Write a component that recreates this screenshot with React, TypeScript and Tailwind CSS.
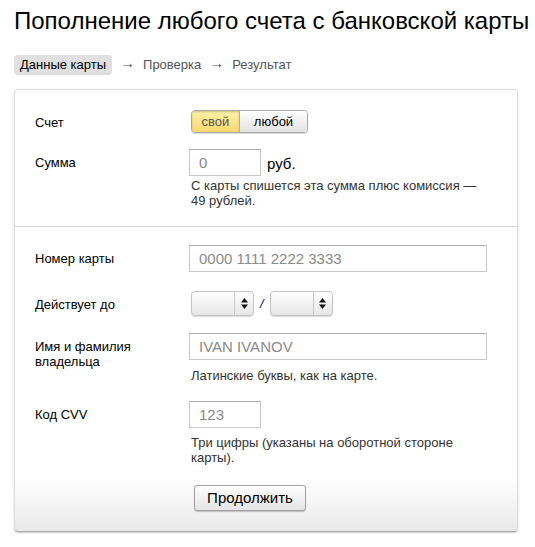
const FONT = { fontFamily: '"Liberation Sans", Arial, sans-serif' };

function Row({ label, children, className = "" }: { label: React.ReactNode; children: React.ReactNode; className?: string }) {
  return (
    <div className={`flex ${className}`}>
      <div className="w-[176px] shrink-0 pl-[20px] pt-[6px] text-[13px] leading-[15px] text-black">{label}</div>
      <div className="flex-1">{children}</div>
    </div>
  );
}

function TextBox({ value, w }: { value: string; w: string }) {
  return (
    <div className={`${w} h-[27px] border border-[#c8c8c8] border-t-[#b0b0b0] bg-white px-[9px] text-[15px] leading-[25px] text-[#8a8a8a]`}>
      {value}
    </div>
  );
}

function SelectBox() {
  return (
    <div className="flex h-[25px] w-[63px] rounded-[4px] border border-[#c4c4c4] bg-gradient-to-b from-[#ffffff] to-[#e6e6e6] shadow-[0_1px_1px_rgba(0,0,0,0.15)]">
      <div className="flex-1" />
      <div className="flex w-[19px] items-center justify-center border-l border-[#c8c8c8]">
        <svg width="7" height="11" viewBox="0 0 7 11">
          <path d="M3.5 0 L7 4.5 L0 4.5 Z" fill="#111" />
          <path d="M0 6.5 L7 6.5 L3.5 11 Z" fill="#111" />
        </svg>
      </div>
    </div>
  );
}

function Hint({ children }: { children: React.ReactNode }) {
  return <p className="text-[13px] leading-[15px] text-[#333]">{children}</p>;
}

export default function App() {
  return (
    <div className="min-h-[547px] bg-white pt-[6px]" style={FONT}>
      <h1 className="whitespace-nowrap pl-[14px] text-[24px] leading-[30px] text-black">Пополнение любого счета с банковской карты</h1>

      {/* Steps */}
      <div className="mt-[19px] flex h-[20px] items-center pl-[14px] text-[13px] text-[#555]">
        <span className="flex h-[20px] items-center rounded-[4px] bg-[#e0e0e0] px-[6px] text-black">Данные карты</span>
        <span className="relative -top-[3px] px-[8px] text-[15px] leading-[15px]">→</span>
        <span>Проверка</span>
        <span className="relative -top-[3px] px-[8px] text-[15px] leading-[15px]">→</span>
        <span>Результат</span>
      </div>

      {/* Card */}
      <div className="mx-[14px] mt-[14px] w-[504px] overflow-hidden rounded-[4px] border border-[#dcdcdc] border-b-[#aaa] bg-gradient-to-b from-white from-[88%] to-[#e9e9e9] shadow-[0_1px_2px_rgba(0,0,0,0.2)]">
        <div className="pb-[18px] pt-[19px]">
          <Row label="Счет" className="items-start">
            <div className="mt-[1px] flex h-[23px] w-[117px] overflow-hidden rounded-[4px] border border-[#a8a8a8] text-[13px] shadow-[0_1px_1px_rgba(0,0,0,0.15)]">
              <div className="flex w-[47px] items-center justify-center bg-gradient-to-b from-[#fff1a8] to-[#f7d96c] text-[#555] shadow-[inset_0_1px_2px_rgba(0,0,0,0.2)]">свой</div>
              <div className="flex flex-1 items-center justify-center border-l border-[#b0b0b0] bg-gradient-to-b from-white to-[#e3e3e3] text-black">любой</div>
            </div>
          </Row>
          <Row label="Сумма" className="mt-[16px]">
            <div className="-ml-[2px] flex items-end">
              <TextBox value="0" w="w-[72px]" />
              <span className="mb-[1px] ml-[6px] text-[15px] text-black">руб.</span>
            </div>
            <div className="mt-[2px]">
              <Hint>
                С карты спишется эта сумма плюс комиссия —<br />49 рублей.
              </Hint>
            </div>
          </Row>
        </div>

        <div className="border-t border-[#d6d6d6] pb-[20px] pt-[18px]">
          <Row label="Номер карты">
            <div className="-ml-[2px]">
              <TextBox value="0000 1111 2222 3333" w="w-[298px]" />
            </div>
          </Row>
          <Row label="Действует до" className="mt-[19px]">
            <div className="flex items-center">
              <SelectBox />
              <span className="mx-[6px] text-[13px] italic text-[#00008b]">/</span>
              <SelectBox />
            </div>
          </Row>
          <Row label={<>Имя и фамилия<br />владельца</>} className="mt-[17px]">
            <div className="-ml-[2px]">
              <TextBox value="IVAN IVANOV" w="w-[298px]" />
            </div>
            <div className="mt-[8px]">
              <Hint>Латинские буквы, как на карте.</Hint>
            </div>
          </Row>
          <Row label="Код CVV" className="mt-[18px]">
            <div className="-ml-[2px]">
              <TextBox value="123" w="w-[72px]" />
            </div>
            <div className="mt-[7px]">
              <Hint>
                Три цифры (указаны на оборотной стороне
                <br />
                карты).
              </Hint>
            </div>
            <button className="ml-[3px] mt-[20px] h-[26px] w-[112px] rounded-[3px] border border-[#a0a0a0] bg-gradient-to-b from-white to-[#e4e4e4] text-[15px] text-black shadow-[0_1px_1px_rgba(0,0,0,0.2)]">
              Продолжить
            </button>
          </Row>
        </div>
      </div>
    </div>
  );
}
